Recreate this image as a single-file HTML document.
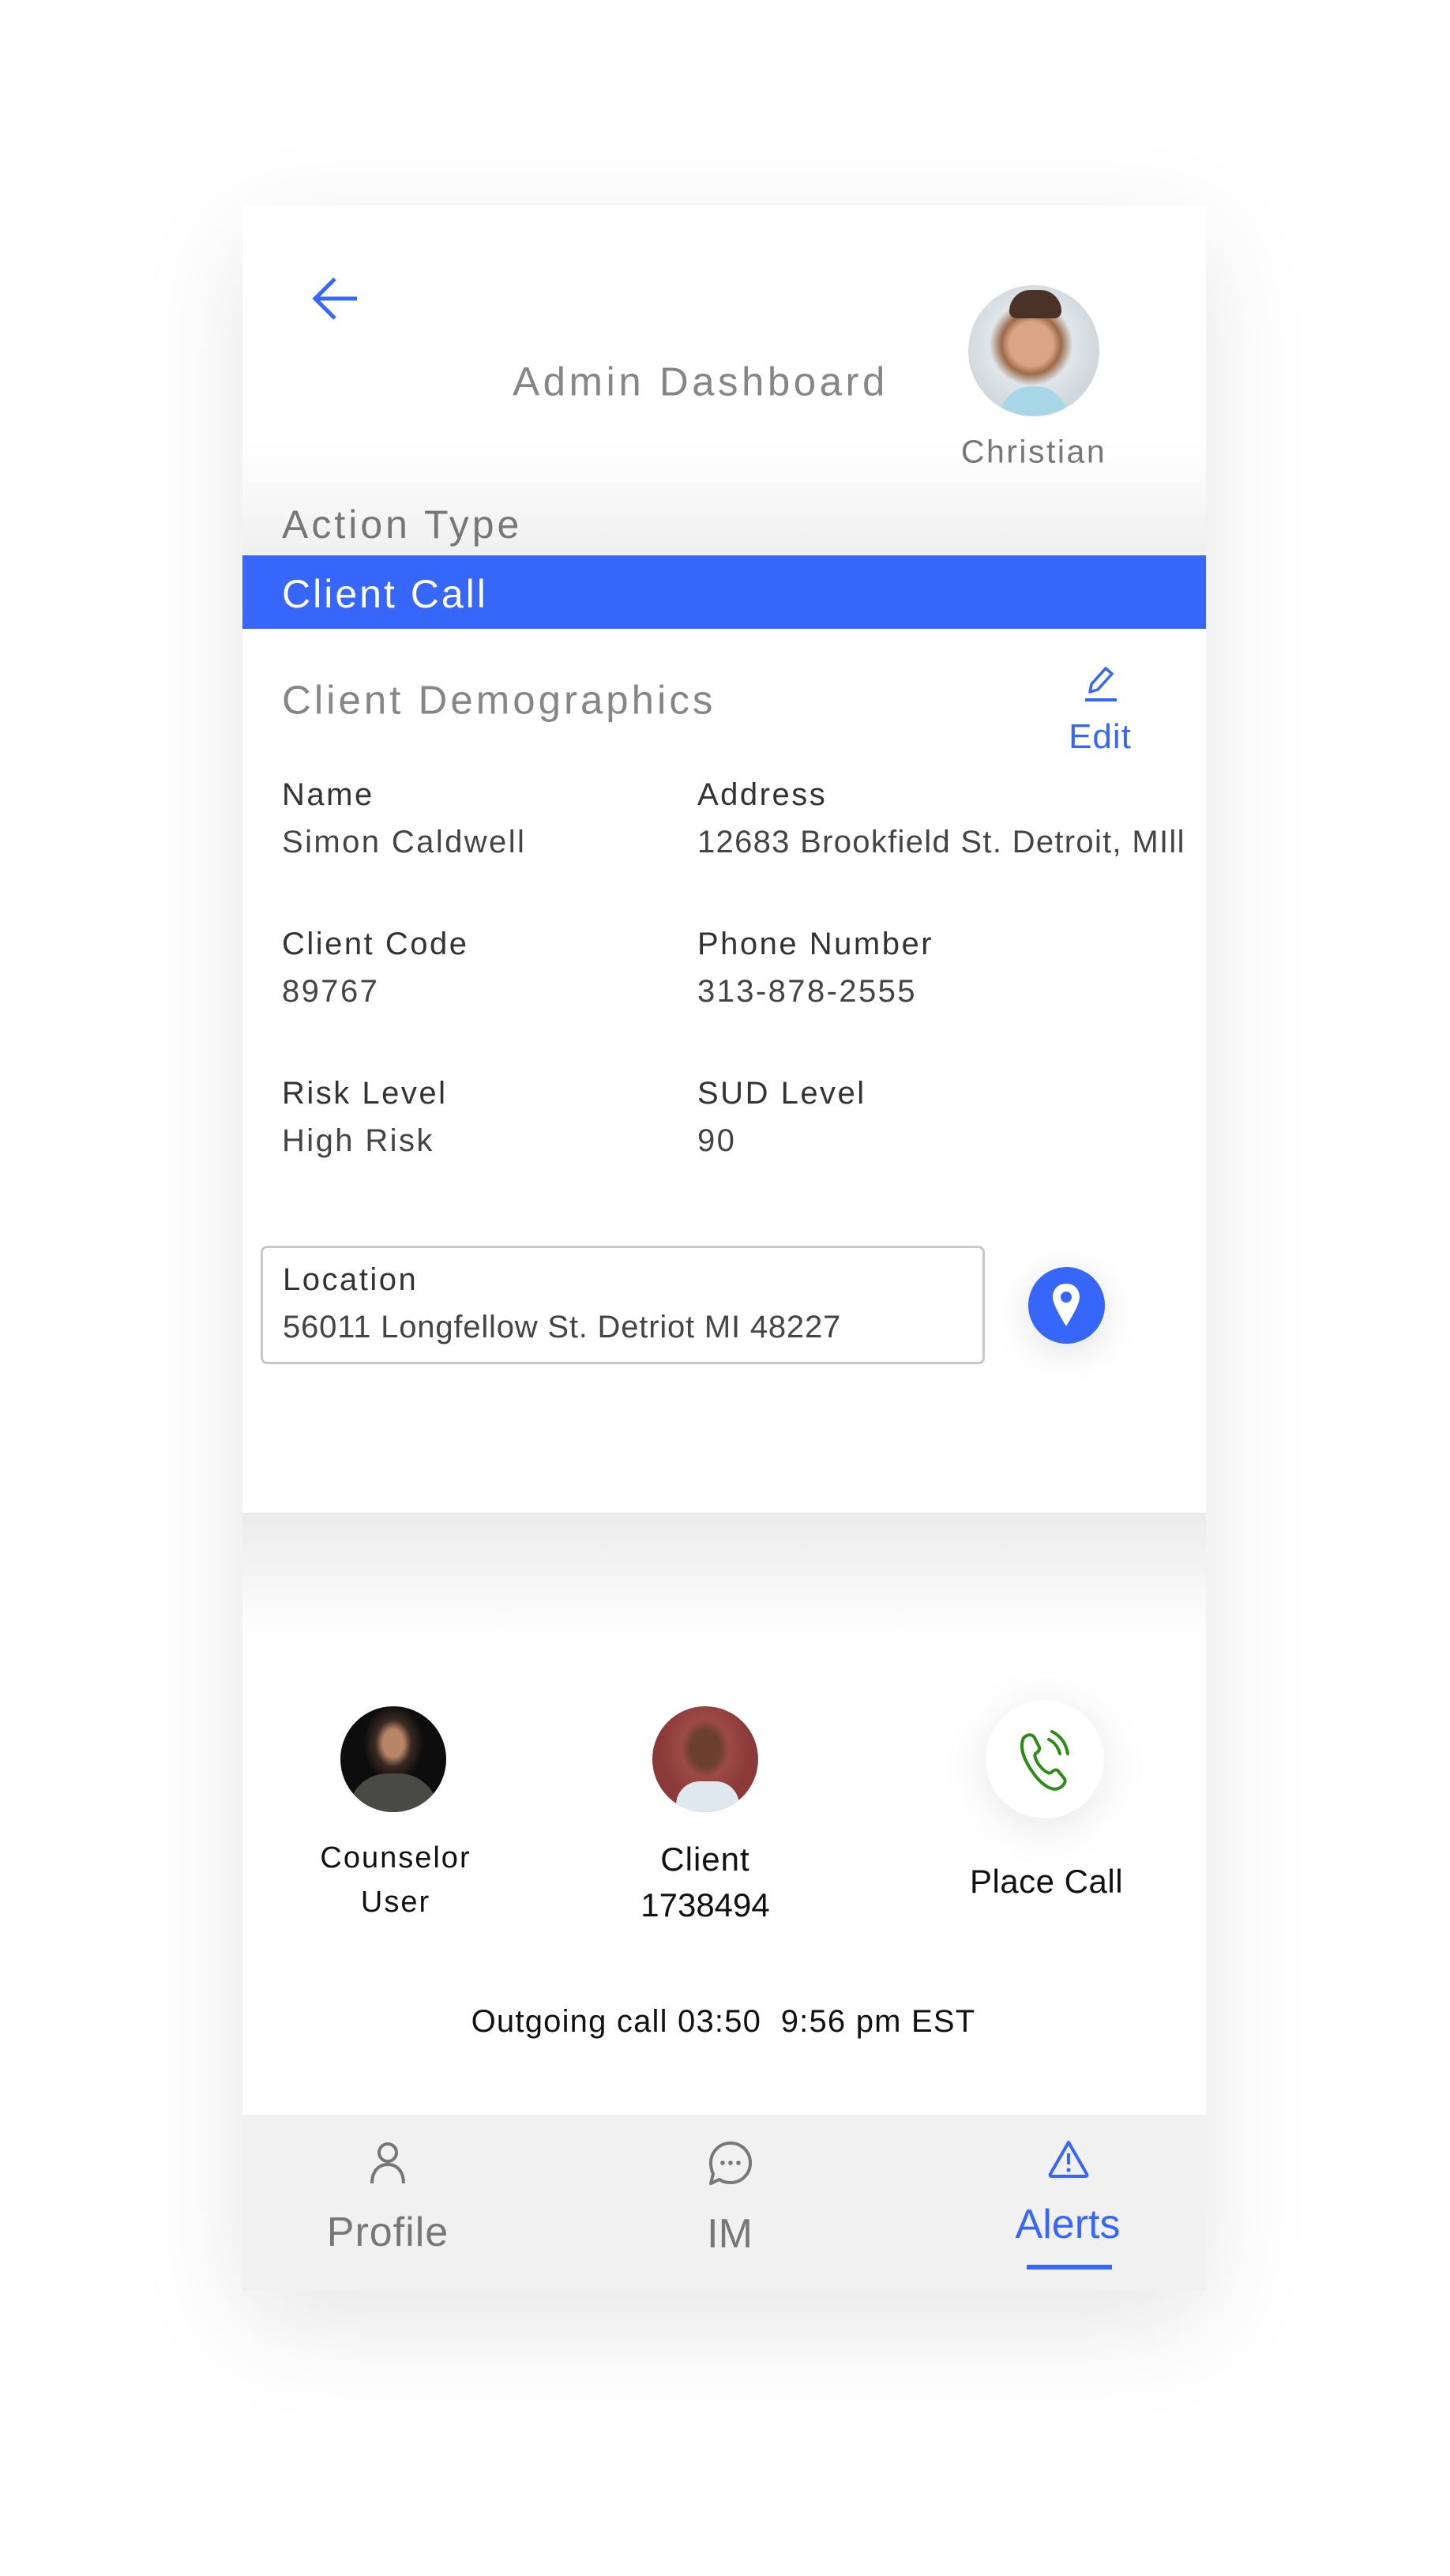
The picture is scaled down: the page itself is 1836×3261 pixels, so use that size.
<!DOCTYPE html>
<html><head><meta charset="utf-8"><style>
*{margin:0;padding:0;box-sizing:border-box}
body{width:1836px;height:3261px;background:#fff;position:relative;overflow:hidden;font-family:"Liberation Sans",sans-serif}
.card{position:absolute;left:307px;top:260px;width:1220px;height:2640px;background:#fff;box-shadow:0 40px 140px rgba(0,0,0,0.10)}
.t{position:absolute;white-space:nowrap;line-height:1}
.c{transform:translate(-50%,-50%)}
.l{transform:translateY(-50%)}
.lab{font-size:40px;color:#333;letter-spacing:2.5px}
.val{font-size:40px;color:#444;letter-spacing:2.4px}
</style></head><body>
<div class="card"></div>
<div style="position:absolute;left:307px;top:560px;width:1220px;height:142px;background:linear-gradient(#fff,#f0f0f0)"></div>
<div style="position:absolute;left:307px;top:1915px;width:1220px;height:160px;background:linear-gradient(#ebebeb,#fff)"></div>

<svg style="position:absolute;left:394px;top:348px" width="62" height="60" viewBox="0 0 62 60"><path d="M58 30H6M30 5L5 30L30 55" fill="none" stroke="#3766fb" stroke-width="5"/></svg>
<div class="t c" style="left:887px;top:483px;font-size:51px;color:#8a8585;letter-spacing:4.5px">Admin Dashboard</div>
<div style="position:absolute;left:1226px;top:361px;width:166px;height:166px;border-radius:50%;background:radial-gradient(circle at 48% 45%,#d9a585 0 22%,#9c6a4a 30%,#dfe6ea 42%,#cfd7dc 70%),#d5dde2;overflow:hidden"><div style="position:absolute;left:40px;top:128px;width:86px;height:60px;border-radius:40px 40px 0 0;background:#a8d7e8"></div><div style="position:absolute;left:52px;top:6px;width:66px;height:36px;border-radius:30px 30px 10px 10px;background:#4a3326"></div></div>
<div class="t c" style="left:1309px;top:572px;font-size:41px;color:#777;letter-spacing:2.5px">Christian</div>

<div class="t l" style="left:357px;top:664px;font-size:50px;color:#777;letter-spacing:4px">Action Type</div>
<div style="position:absolute;left:307px;top:703px;width:1220px;height:93px;background:#3766fb"></div>
<div class="t l" style="left:357px;top:752px;font-size:50px;color:#fff;letter-spacing:3px">Client Call</div>

<div class="t l" style="left:357px;top:886px;font-size:51px;color:#8a8585;letter-spacing:4px">Client Demographics</div>
<svg style="position:absolute;left:1370px;top:840px" width="48" height="50" viewBox="0 0 48 50"><path d="M10 36L12 26L30 6L38 13L20 33Z" fill="none" stroke="#3766fb" stroke-width="3.5" stroke-linejoin="round"/><path d="M4 46H44" stroke="#3766fb" stroke-width="4"/></svg>
<div class="t c" style="left:1393px;top:933px;font-size:44px;color:#3766fb;letter-spacing:1px">Edit</div>

<div class="t l lab" style="left:357px;top:1006px">Name</div>
<div class="t l val" style="left:357px;top:1066px">Simon Caldwell</div>
<div class="t l lab" style="left:883px;top:1006px">Address</div>
<div class="t l val" style="left:883px;top:1066px;letter-spacing:1.3px">12683 Brookfield St. Detroit, MIll</div>
<div class="t l lab" style="left:357px;top:1195px">Client Code</div>
<div class="t l val" style="left:357px;top:1255px">89767</div>
<div class="t l lab" style="left:883px;top:1195px">Phone Number</div>
<div class="t l val" style="left:883px;top:1255px">313-878-2555</div>
<div class="t l lab" style="left:357px;top:1384px">Risk Level</div>
<div class="t l val" style="left:357px;top:1444px">High Risk</div>
<div class="t l lab" style="left:883px;top:1384px">SUD Level</div>
<div class="t l val" style="left:883px;top:1444px">90</div>

<div style="position:absolute;left:330px;top:1577px;width:917px;height:150px;border:3px solid #c8c8c8;border-radius:8px;background:#fff"></div>
<div class="t l lab" style="left:358px;top:1620px">Location</div>
<div class="t l val" style="left:358px;top:1680px;letter-spacing:0.8px">56011 Longfellow St. Detriot MI 48227</div>
<div style="position:absolute;left:1302px;top:1604px;width:97px;height:97px;border-radius:50%;background:#3766fb;box-shadow:0 10px 50px rgba(0,0,0,0.12)"></div>
<svg style="position:absolute;left:1326px;top:1621px" width="48" height="64" viewBox="0 0 48 64"><path d="M24 4C13 4 7 12 7 21C7 30 17 46 24 58C31 46 41 30 41 21C41 12 35 4 24 4Z" fill="#fff"/><circle cx="24" cy="21" r="7" fill="#3766fb"/></svg>

<div style="position:absolute;left:431px;top:2160px;width:134px;height:134px;border-radius:50%;background:radial-gradient(ellipse at 50% 35%,#b88566 0 14%,#3b2a22 24%,#0d0d0d 40%),#111;overflow:hidden"><div style="position:absolute;left:10px;top:85px;width:114px;height:60px;border-radius:50px 50px 0 0;background:#4a4a44"></div></div>
<div style="position:absolute;left:826px;top:2160px;width:134px;height:134px;border-radius:50%;background:radial-gradient(ellipse at 50% 40%,#6b4030 0 20%,#9d4a45 32%,#8a3a38 60%),#8a3a38;overflow:hidden"><div style="position:absolute;left:30px;top:95px;width:80px;height:50px;border-radius:30px 30px 0 0;background:#dfe8ee"></div></div>
<div style="position:absolute;left:1248px;top:2152px;width:150px;height:150px;border-radius:50%;background:#fff;box-shadow:0 10px 60px rgba(0,0,0,0.10)"></div>
<svg style="position:absolute;left:1282px;top:2186px" width="84" height="84" viewBox="0 0 84 84"><path d="M14 14C20 8 26 10 28 14L34 26C35 30 32 32 29 34C27 36 30 44 35 50C40 56 46 60 49 58C52 55 55 53 58 56L66 66C68 70 64 76 58 78C48 82 34 70 26 58C16 44 8 28 14 14Z" fill="none" stroke="#2e8c16" stroke-width="4"/><path d="M46 16C54 20 58 26 60 34M50 6C62 12 68 22 70 34" fill="none" stroke="#2e8c16" stroke-width="4" stroke-linecap="round"/></svg>

<div class="t c" style="left:501px;top:2352px;font-size:38px;color:#111;letter-spacing:2px">Counselor</div>
<div class="t c" style="left:501px;top:2408px;font-size:38px;color:#111;letter-spacing:2px">User</div>
<div class="t c" style="left:893px;top:2354px;font-size:42px;color:#111;letter-spacing:1px">Client</div>
<div class="t c" style="left:893px;top:2412px;font-size:42px;color:#111">1738494</div>
<div class="t c" style="left:1325px;top:2382px;font-size:42px;color:#111;letter-spacing:0.5px">Place Call</div>
<div class="t c" style="left:916px;top:2559px;font-size:40px;color:#111;letter-spacing:1.2px">Outgoing call 03:50&nbsp;&nbsp;9:56 pm EST</div>

<div style="position:absolute;left:307px;top:2677px;width:1220px;height:223px;background:#f1f1f1"></div>
<svg style="position:absolute;left:466px;top:2710px" width="50" height="56" viewBox="0 0 50 56"><circle cx="25" cy="15" r="11" fill="none" stroke="#777" stroke-width="4"/><path d="M5 54C5 38 14 30 25 30C36 30 45 38 45 54" fill="none" stroke="#777" stroke-width="4"/></svg>
<div class="t c" style="left:491px;top:2826px;font-size:52px;color:#777;letter-spacing:1px">Profile</div>
<svg style="position:absolute;left:896px;top:2710px" width="58" height="58" viewBox="0 0 58 58"><path d="M29 3C43 3 54 14 54 28C54 42 43 53 29 53C24 53 19 52 15 49L4 54L7 42C5 38 4 33 4 28C4 14 15 3 29 3Z" fill="none" stroke="#777" stroke-width="4" stroke-linejoin="round"/><circle cx="19" cy="28" r="2.8" fill="#777"/><circle cx="29" cy="28" r="2.8" fill="#777"/><circle cx="39" cy="28" r="2.8" fill="#777"/></svg>
<div class="t c" style="left:924px;top:2828px;font-size:52px;color:#777">IM</div>
<svg style="position:absolute;left:1326px;top:2708px" width="54" height="50" viewBox="0 0 54 50"><path d="M27 4L50 44C51 46 50 47 48 47H6C4 47 3 46 4 44Z" fill="none" stroke="#3766fb" stroke-width="4" stroke-linejoin="round"/><path d="M27 18V32" stroke="#3766fb" stroke-width="4"/><circle cx="27" cy="39" r="2.6" fill="#3766fb"/></svg>
<div class="t c" style="left:1352px;top:2816px;font-size:52px;color:#3766fb">Alerts</div>
<div style="position:absolute;left:1300px;top:2867px;width:108px;height:6px;background:#3766fb"></div>
</body></html>
